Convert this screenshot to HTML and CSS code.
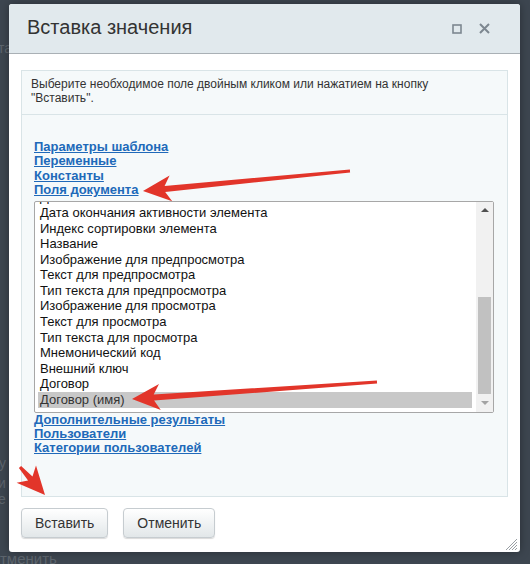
FILE: index.html
```html
<!DOCTYPE html>
<html lang="ru">
<head>
    <meta charset="UTF-8">
    <meta name="viewport" content="width=device-width, initial-scale=1.0">
    <title>Вставка значения</title>
    <link rel="stylesheet" href="styles.css">
</head>
<body>
    <div class="backdrop">
        <span class="ghost ghost-1">та</span>
        <span class="ghost ghost-2">у</span>
        <span class="ghost ghost-3">и<br>е</span>
        <span class="ghost ghost-4">тменить</span>
    </div>

    <div class="dialog">
        <div class="dialog-head">
            <span class="dialog-title">Вставка значения</span>
            <span class="head-icons">
                <svg width="10" height="10" viewBox="0 0 10 10"><rect x="1" y="1" width="8" height="8" fill="none" stroke="#7d8790" stroke-width="1.6"/></svg>
                <svg width="11" height="11" viewBox="0 0 11 11"><path d="M1 1L10 10M10 1L1 10" stroke="#7d8790" stroke-width="2"/></svg>
            </span>
        </div>

        <div class="dialog-body">
            <div class="panel">
                <div class="desc">Выберите необходимое поле двойным кликом или нажатием на кнопку<br>"Вставить".</div>
                <div class="fields">
                    <a href="#" class="group">Параметры шаблона</a>
                    <a href="#" class="group">Переменные</a>
                    <a href="#" class="group">Константы</a>
                    <a href="#" class="group">Поля документа</a>
                    <div class="select">
                        <div class="options">
                            <div class="option">Дата начала активности элемента</div>
                            <div class="option">Дата окончания активности элемента</div>
                            <div class="option">Индекс сортировки элемента</div>
                            <div class="option">Название</div>
                            <div class="option">Изображение для предпросмотра</div>
                            <div class="option">Текст для предпросмотра</div>
                            <div class="option">Тип текста для предпросмотра</div>
                            <div class="option">Изображение для просмотра</div>
                            <div class="option">Текст для просмотра</div>
                            <div class="option">Тип текста для просмотра</div>
                            <div class="option">Мнемонический код</div>
                            <div class="option">Внешний ключ</div>
                            <div class="option">Договор</div>
                            <div class="option selected">Договор (имя)</div>
                        </div>
                        <div class="scrollbar">
                            <span class="arrow-up"></span>
                            <span class="track"><span class="thumb"></span></span>
                            <span class="arrow-down"></span>
                        </div>
                    </div>
                    <a href="#" class="group">Дополнительные результаты</a>
                    <a href="#" class="group">Пользователи</a>
                    <a href="#" class="group">Категории пользователей</a>
                </div>
            </div>
        </div>

        <div class="dialog-foot">
            <button class="btn">Вставить</button>
            <button class="btn">Отменить</button>
        </div>

        <svg class="grip" width="13" height="13" viewBox="0 0 13 13">
            <path d="M12 1L1 12M12 4L4 12M12 7L7 12M12 10L10 12" stroke="#9aa0a5" stroke-width="1"/>
        </svg>
    </div>

    <!-- red annotation arrows -->
    <svg class="marks" width="530" height="564" viewBox="0 0 530 564">
        <polygon points="143,191 169.6,175.4 164.6,185.9 349.9,169.5 350.1,172.5 165.2,191.9 172.2,201.2" />
        <polygon points="132,399 159,384.1 153.7,394.5 376.9,380.5 377.1,383.5 154.1,400.5 160.8,410.1" />
        <polygon points="45,495 36,465.4 32.5,476.6 21.1,466 18.9,468 28.1,480.6 16.6,482.8" />
    </svg>
</body>
</html>
```

FILE: styles.css
```css
body {
    margin: 0;
    width: 530px;
    height: 564px;
    overflow: hidden;
    background: #3d4650;
    font-family: "Liberation Sans", Arial, sans-serif;
    position: relative;
}
.backdrop {
    height: 564px;
}
.ghost {
    position: absolute;
    color: #5d656d;
    font-size: 14px;
    line-height: 16px;
}
.ghost-1 { left: -2px; top: 40px; }
.ghost-2 { left: -1px; top: 455px; }
.ghost-3 { left: -2px; top: 475px; }
.ghost-4 { left: 0; top: 551px; font-size: 15px; }

.dialog {
    position: absolute;
    left: 9px;
    top: 4px;
    width: 511px;
    height: 548px;
    background: #fff;
    border-radius: 3px;
    box-shadow: 0 0 10px rgba(0, 0, 0, 0.35);
    display: flex;
    flex-direction: column;
}
.dialog-head {
    height: 49px;
    background: #e1e9ed;
    border-bottom: 1px solid #a9b0b5;
    border-radius: 3px 3px 0 0;
    display: flex;
    align-items: center;
    justify-content: space-between;
    padding: 0 30px 0 18px;
}
.dialog-title {
    font-size: 20px;
    color: #333;
    margin-top: -2px;
}
.head-icons {
    display: flex;
    align-items: center;
    gap: 17px;
}
.dialog-body {
    padding: 16px 12px 0 12px;
}
.panel {
    height: 425px;
    background: #f5f9fa;
    border: 1px solid #d9e4e7;
    display: flex;
    flex-direction: column;
}
.desc {
    height: 31px;
    padding: 6px 9px;
    border-bottom: 1px solid #d9e4e7;
    font-size: 12px;
    line-height: 14px;
    color: #333;
}
.fields {
    padding: 25px 12px 0 12px;
    display: flex;
    flex-direction: column;
    align-items: flex-start;
}
.group {
    font-size: 13px;
    font-weight: bold;
    line-height: 14.4px;
    color: #2069b9;
    text-decoration: underline;
}
.select {
    margin-top: 3px;
    width: 458px;
    height: 210px;
    border: 1px solid #a7a7a7;
    border-radius: 2px;
    background: #fff;
    display: flex;
}
.options {
    flex: 1;
    overflow: hidden;
    display: flex;
    flex-direction: column;
    justify-content: flex-end;
    padding: 0 4px 4px 3px;
}
.option {
    flex: none;
    height: 15.6px;
    line-height: 15.6px;
    padding: 0 2px;
    font-size: 13px;
    color: #111;
    white-space: nowrap;
}
.option.selected {
    background: #c8c8c8;
    color: #333;
}
.scrollbar {
    width: 17px;
    background: #f1f1f1;
    display: flex;
    flex-direction: column;
    align-items: center;
}
.arrow-up, .arrow-down {
    height: 17px;
    display: flex;
    align-items: center;
}
.arrow-up::before {
    content: "";
    border: 4px solid transparent;
    border-bottom: 4px solid #505050;
    border-top: 0;
}
.arrow-down::before {
    content: "";
    border: 4px solid transparent;
    border-top: 4px solid #a3a3a3;
    border-bottom: 0;
}
.track {
    flex: 1;
    display: flex;
    flex-direction: column;
    justify-content: flex-end;
    padding: 0 2px 1px;
    align-self: stretch;
}
.thumb {
    height: 97px;
    background: #c1c1c1;
}
.dialog-foot {
    padding: 11px 0 0 12px;
    display: flex;
    gap: 15px;
}
.btn {
    height: 30px;
    padding: 0 13px;
    border: 1px solid #c6ccd0;
    border-radius: 4px;
    background: linear-gradient(#ffffff, #e2e7e9);
    box-shadow: 0 1px 1px rgba(0, 0, 0, 0.15);
    font-family: "Liberation Sans", Arial, sans-serif;
    font-size: 14px;
    color: #333;
    cursor: pointer;
}
.grip {
    position: absolute;
    right: 2px;
    bottom: 1px;
}
.marks {
    position: absolute;
    left: 0;
    top: 0;
    pointer-events: none;
}
.marks polygon {
    fill: #e2352a;
}
```
